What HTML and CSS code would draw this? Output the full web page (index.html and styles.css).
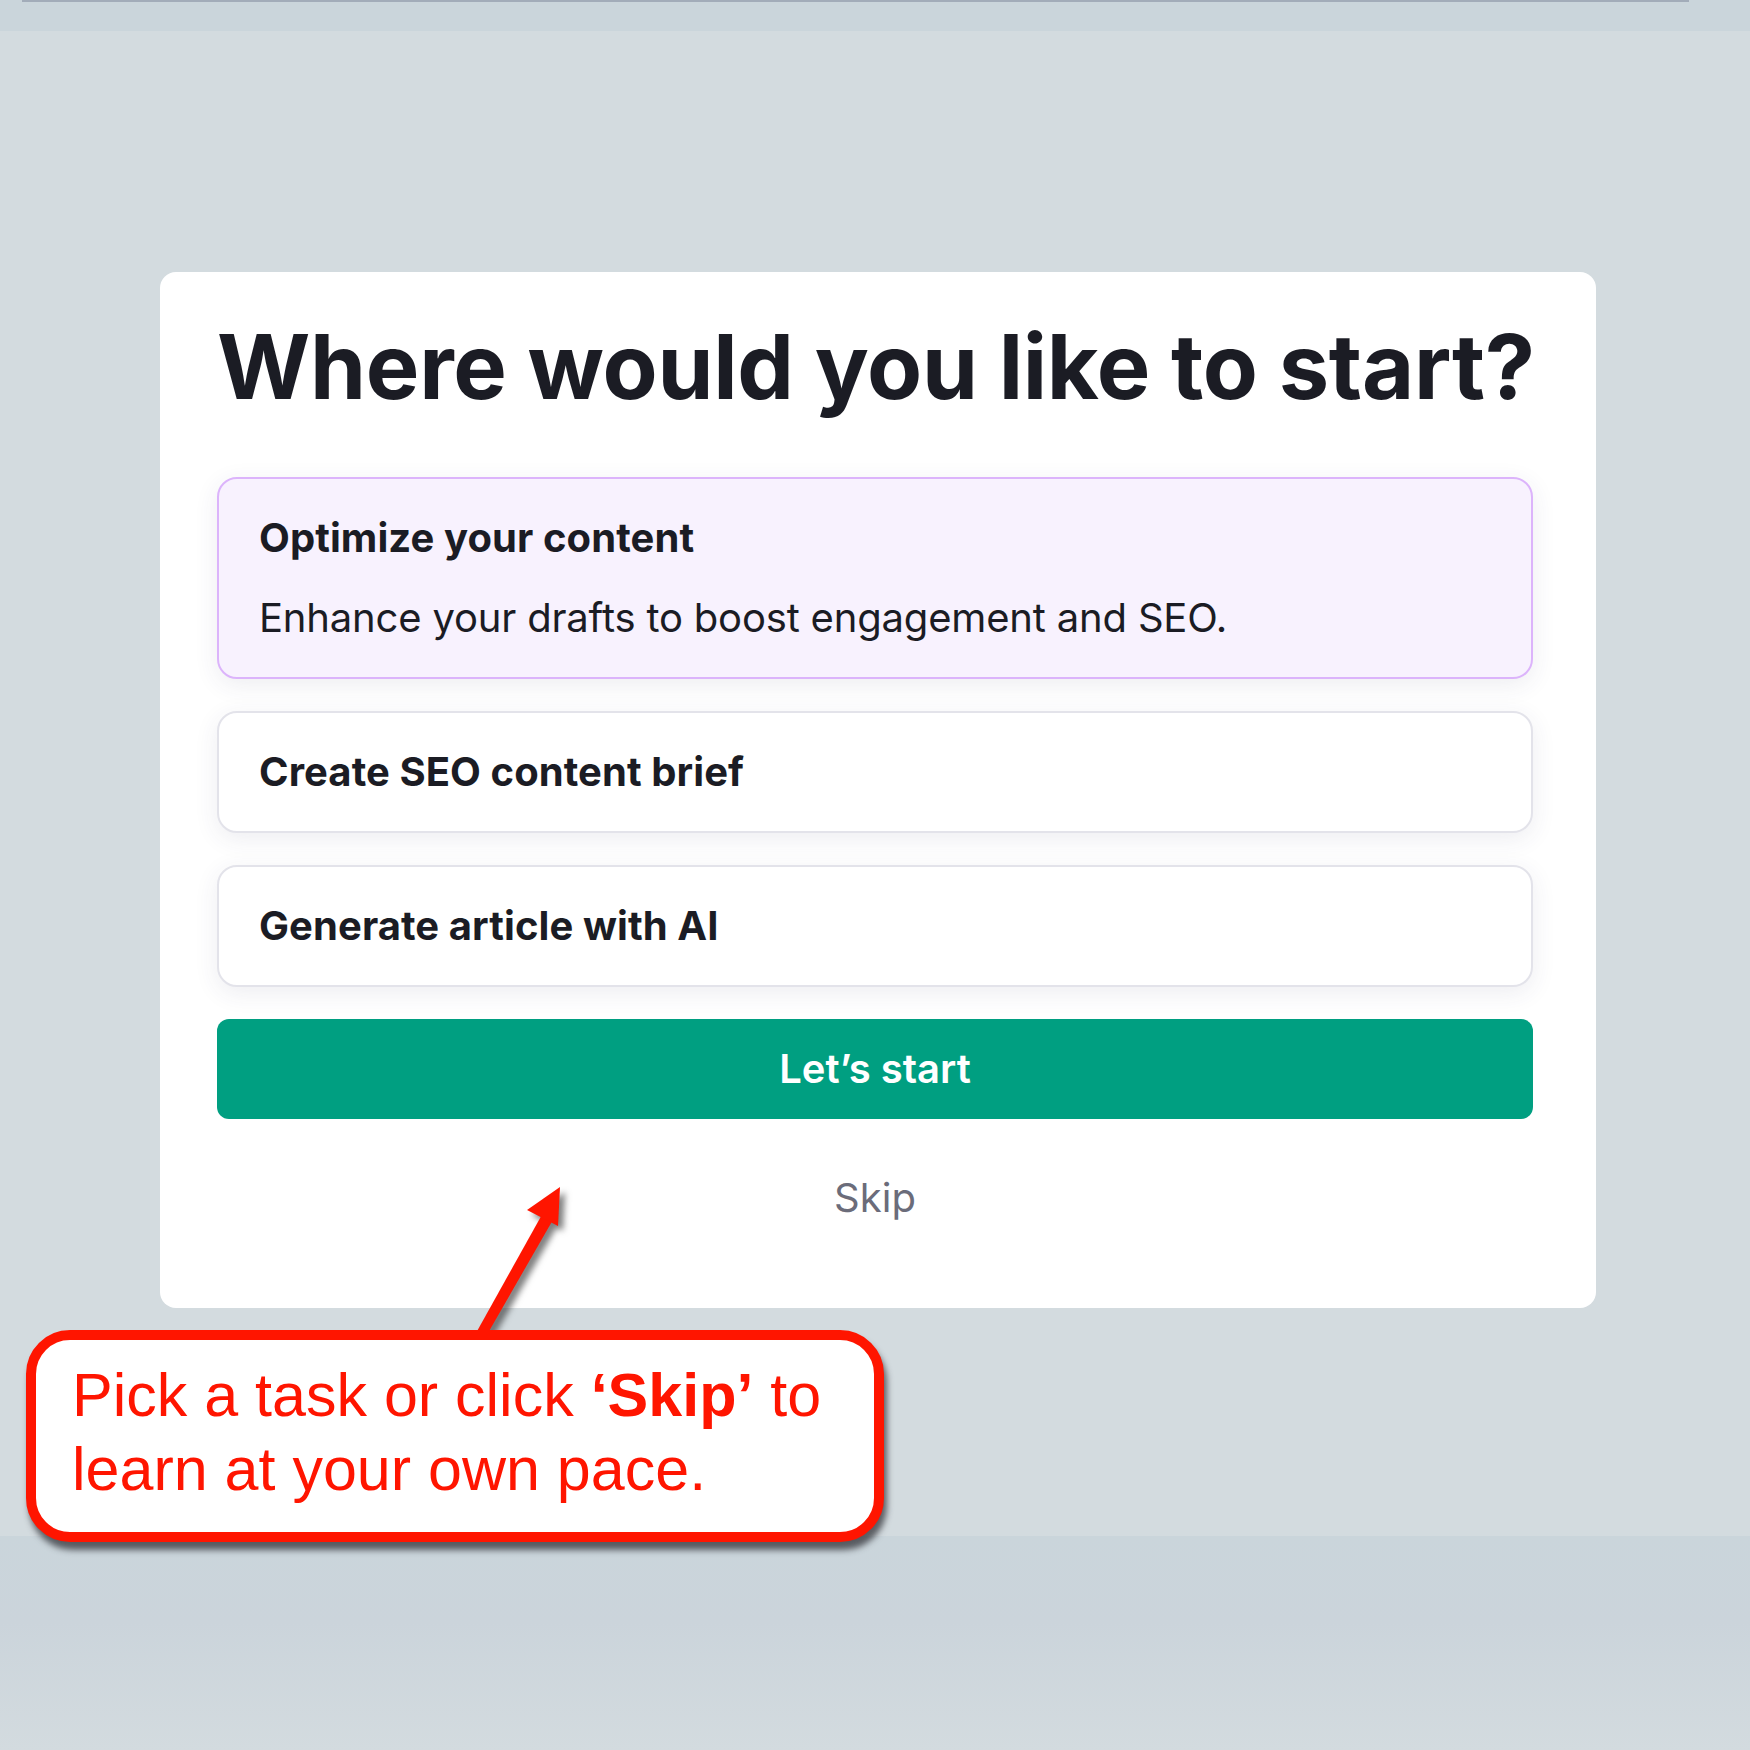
FILE: index.html
```html
<!DOCTYPE html>
<html lang="en">
<head>
<meta charset="utf-8">
<title>Where would you like to start?</title>
<link rel="stylesheet" href="styles.css">
</head>
<body>
<div class="page">
  <div class="topband"><div class="topline"></div></div>
  <main class="stage">
    <section class="card">
      <h1 class="title">Where would you like to start?</h1>
      <div class="options">
        <div class="option selected">
          <div class="opt-title">Optimize your content</div>
          <div class="opt-desc">Enhance your drafts to boost engagement and SEO.</div>
        </div>
        <div class="option">
          <div class="opt-title">Create SEO content brief</div>
        </div>
        <div class="option">
          <div class="opt-title">Generate article with AI</div>
        </div>
      </div>
      <button class="start">Let’s start</button>
      <div class="skip">Skip</div>
    </section>
  </main>
  <div class="bottomband"></div>

  <svg class="arrow" width="140" height="180" viewBox="460 1170 140 180" xmlns="http://www.w3.org/2000/svg">
    <g fill="#ff1500" stroke="none">
      <polygon points="476,1333 488,1333 554,1218 544,1211"/>
      <polygon points="560,1187 527,1210 558,1226"/>
    </g>
  </svg>
  <div class="callout">
    <p class="line">Pick a task or click <b>‘Skip’</b> to</p>
    <p class="line">learn at your own pace.</p>
  </div>
</div>
</body>
</html>
```
FILE: styles.css
```css
* { box-sizing: border-box; }
html, body { margin: 0; padding: 0; }
body {
  width: 1750px;
  height: 1750px;
  overflow: hidden;
  background: #d3dbdf;
  font-family: Inter, "Noto Sans", sans-serif;
}
.page {
  position: relative;
  width: 1750px;
  height: 1750px;
  display: flex;
  flex-direction: column;
}
.topband {
  height: 31px;
  background: #cad5db;
  padding: 0 61px 0 22px;
}
.topline {
  height: 2px;
  background: #a2acb9;
}
.stage {
  height: 1505px;
  background: #d3dbdf;
  padding: 241px 0 0 160px;
}
.card {
  width: 1436px;
  height: 1036px;
  background: #ffffff;
  border-radius: 16px;
  padding: 41px 63px 0 57px;
  display: flex;
  flex-direction: column;
}
.title {
  margin: 0;
  font-size: 90px;
  line-height: 108px;
  font-weight: 700;
  color: #1b1c24;
  letter-spacing: -0.3px;
  white-space: nowrap;
}
.options {
  margin-top: 56px;
  display: flex;
  flex-direction: column;
  gap: 32px;
}
.option {
  border: 2px solid #e3e3ea;
  border-radius: 20px;
  background: #ffffff;
  padding: 35px 40px;
  box-shadow: 0 6px 24px rgba(60, 60, 100, 0.09);
  display: flex;
  flex-direction: column;
  gap: 32px;
}
.option.selected {
  border-color: #dcb4fb;
  background: #f8f2fe;
}
.opt-title {
  font-size: 40px;
  line-height: 48px;
  font-weight: 700;
  color: #1b1c24;
  letter-spacing: 0.08px;
}
.opt-desc {
  font-size: 40px;
  line-height: 48px;
  font-weight: 400;
  color: #1b1c24;
  letter-spacing: -0.18px;
}
.start {
  margin-top: 32px;
  height: 100px;
  border: 0;
  border-radius: 12px;
  background: #009f81;
  color: #ffffff;
  font-family: Inter, "Noto Sans", sans-serif;
  font-size: 40px;
  line-height: 48px;
  font-weight: 600;
  padding: 0;
}
.skip {
  margin-top: 55px;
  text-align: center;
  font-size: 40px;
  line-height: 48px;
  color: #6b6c7a;
}
.bottomband {
  height: 214px;
  background: linear-gradient(#cad5db, #cbd4db 40%, #d3dbdf);
}
.arrow {
  position: absolute;
  left: 460px;
  top: 1170px;
  filter: drop-shadow(5px 5px 3px rgba(40, 40, 40, 0.6));
}
.callout {
  position: absolute;
  left: 26px;
  top: 1330px;
  width: 858px;
  height: 212px;
  border: 10px solid #ff1500;
  border-radius: 44px;
  background: #ffffff;
  box-shadow: 3px 8px 6px rgba(40, 40, 45, 0.7);
  padding: 18px 16px 0 36px;
}
.line {
  margin: 0;
  font-family: "Liberation Sans", Arial, sans-serif;
  font-size: 61px;
  line-height: 74px;
  color: #ff1500;
  white-space: nowrap;
}
.line b { font-weight: 700; }
```
